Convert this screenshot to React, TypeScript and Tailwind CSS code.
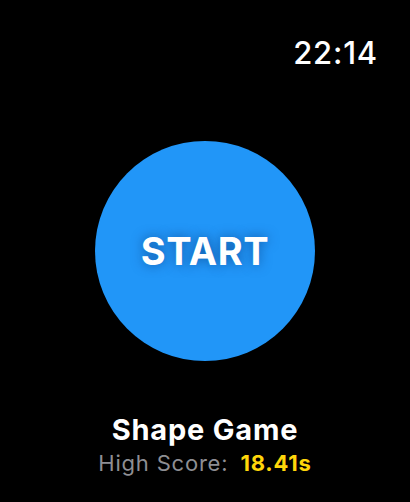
export default function App() {
    return (
        <main className="flex h-[502px] w-[410px] flex-col bg-black font-['Inter','Liberation_Sans',sans-serif] text-white">
            <header className="flex justify-end pt-[37px] pr-[32px]">
                <span className="text-[31px] leading-none font-medium tracking-[0.8px]">22:14</span>
            </header>

            <div className="flex justify-center pt-[73px]">
                <button className="flex size-[220px] items-center justify-center rounded-full bg-[#2196f8]">
                    <span className="text-[38px] leading-none font-bold tracking-[0.6px] [text-shadow:0_0_12px_rgba(0,40,100,0.55)]">
                        START
                    </span>
                </button>
            </div>

            <footer className="flex flex-col items-center pt-[54px]">
                <h1 className="text-[29px] leading-none font-bold tracking-[0.8px]">Shape Game</h1>
                <p className="mt-[8px] text-[22px] leading-none tracking-[0.8px]">
                    <span className="text-[#8e8e93]">High Score:</span>
                    <span className="ml-[12px] font-bold text-[#ffd60a]">18.41s</span>
                </p>
            </footer>
        </main>
    );
}
